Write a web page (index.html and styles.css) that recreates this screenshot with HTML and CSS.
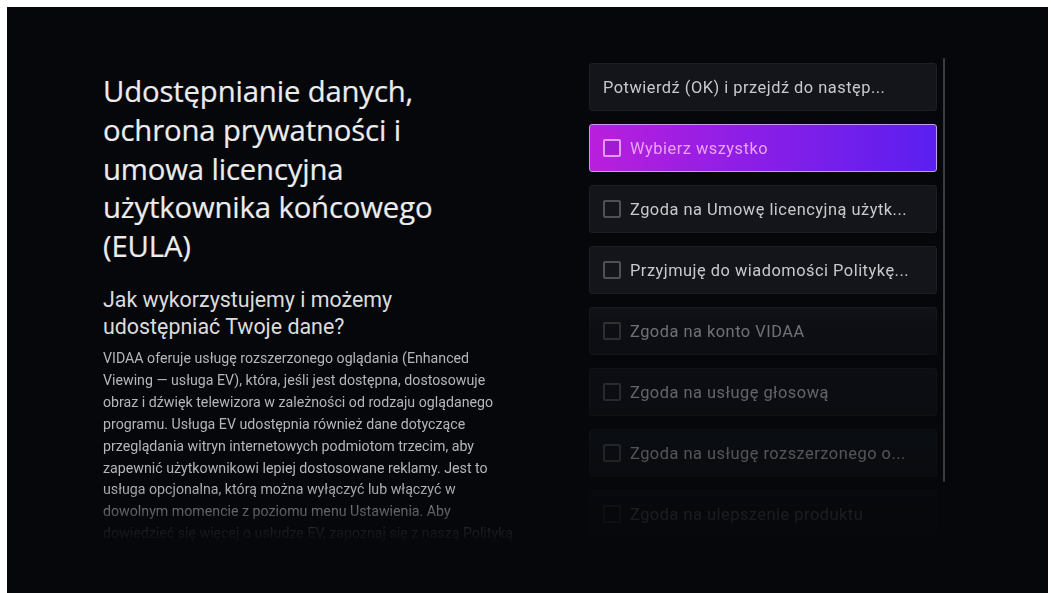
FILE: index.html
```html
<!DOCTYPE html>
<html lang="pl">
<head>
<meta charset="utf-8">
<title>EULA</title>
<link rel="stylesheet" href="styles.css">
</head>
<body>
<div class="screen">
  <section class="info">
    <h1 class="title">Udostępnianie danych, ochrona prywatności i umowa licencyjna użytkownika końcowego (EULA)</h1>
    <h2 class="subtitle">Jak wykorzystujemy i możemy udostępniać Twoje dane?</h2>
    <div class="body-wrap">
      <p class="body">VIDAA oferuje usługę rozszerzonego oglądania (Enhanced<br>Viewing — usługa EV), która, jeśli jest dostępna, dostosowuje<br>obraz i dźwięk telewizora w zależności od rodzaju oglądanego<br>programu. Usługa EV udostępnia również dane dotyczące<br>przeglądania witryn internetowych podmiotom trzecim, aby<br>zapewnić użytkownikowi lepiej dostosowane reklamy. Jest to<br>usługa opcjonalna, którą można wyłączyć lub włączyć w<br>dowolnym momencie z poziomu menu Ustawienia. Aby<br>dowiedzieć się więcej o usłudze EV, zapoznaj się z naszą Polityką</p>
    </div>
  </section>
  <section class="options">
    <ul class="list">
      <li class="item plain">Potwierdź (OK) i przejdź do następ...</li>
      <li class="item focused"><span class="box"></span>Wybierz wszystko</li>
      <li class="item"><span class="box"></span>Zgoda na Umowę licencyjną użytk...</li>
      <li class="item"><span class="box"></span>Przyjmuję do wiadomości Politykę...</li>
      <li class="item"><span class="box"></span>Zgoda na konto VIDAA</li>
      <li class="item"><span class="box"></span>Zgoda na usługę głosową</li>
      <li class="item"><span class="box"></span>Zgoda na usługę rozszerzonego o...</li>
      <li class="item"><span class="box"></span>Zgoda na ulepszenie produktu</li>
    </ul>
    <div class="scrollbar"></div>
  </section>
</div>
</body>
</html>
```

FILE: styles.css
```css
html, body {
  margin: 0;
  padding: 0;
  background: #ffffff;
  overflow: hidden;
}

.screen {
  margin: 7px 3px 0 7px;
  height: 600px;
  background: #05070b;
  display: flex;
  padding: 56px 0 0 96px;
  box-sizing: border-box;
  font-family: Roboto, "Noto Sans", sans-serif;
}

.info {
  width: 445px;
  flex: none;
}

.title {
  margin: 9px 0 0;
  font-family: "Open Sans", sans-serif;
  font-weight: 400;
  font-size: 29.3px;
  line-height: 38.8px;
  letter-spacing: -0.15px;
  color: #ececed;
  width: 400px;
  -webkit-text-stroke: 0.2px #ececed;
}

.subtitle {
  margin: 20px 0 0;
  font-weight: 400;
  font-size: 21.4px;
  line-height: 27px;
  color: #dcdcdd;
  width: 330px;
}

.body-wrap {
  margin-top: 8px;
  height: 200px;
  overflow: hidden;
  -webkit-mask-image: linear-gradient(to bottom, #000 0, #000 138px, rgba(0,0,0,0.6) 160px, rgba(0,0,0,0.12) 182px, transparent 198px);
  mask-image: linear-gradient(to bottom, #000 0, #000 138px, rgba(0,0,0,0.6) 160px, rgba(0,0,0,0.12) 182px, transparent 198px);
}

.body {
  margin: 0;
  font-size: 14.2px;
  line-height: 21.9px;
  color: #b6b6b8;
  white-space: nowrap;
}

.options {
  margin-left: 41px;
  display: flex;
  align-items: flex-start;
}

.list {
  list-style: none;
  margin: 0;
  padding: 0;
  width: 348px;
  display: flex;
  flex-direction: column;
  gap: 13px;
  -webkit-mask-image: linear-gradient(to bottom, #000 0, #000 236px, rgba(0,0,0,0.55) 262px, rgba(0,0,0,0.46) 350px, rgba(0,0,0,0.38) 400px, rgba(0,0,0,0.13) 440px, rgba(0,0,0,0.08) 470px);
  mask-image: linear-gradient(to bottom, #000 0, #000 236px, rgba(0,0,0,0.55) 262px, rgba(0,0,0,0.46) 350px, rgba(0,0,0,0.38) 400px, rgba(0,0,0,0.13) 440px, rgba(0,0,0,0.08) 470px);
}

.item {
  height: 48px;
  box-sizing: border-box;
  display: flex;
  align-items: center;
  gap: 9px;
  padding: 0 13px;
  background: #14151b;
  border: 1px solid #1d1e25;
  border-radius: 3px;
  color: #c9c9cc;
  font-size: 16.4px;
  letter-spacing: 0.5px;
  white-space: nowrap;
}

.box {
  width: 14px;
  height: 14px;
  flex: none;
  border: 2px solid #4f5055;
  border-radius: 2px;
}

.item.focused {
  background: linear-gradient(90deg, #b91fdc 0%, #8d1ee6 45%, #5a1ff0 100%);
  border: 1px solid #c79af2;
  color: #eaa2f6;
}

.item.focused .box {
  border-color: #e39af4;
  background: #9f1ad0;
}

.scrollbar {
  width: 2px;
  height: 424px;
  margin: -5px 0 0 6px;
  background: #3b3c43;
  border-radius: 1px;
}
```
